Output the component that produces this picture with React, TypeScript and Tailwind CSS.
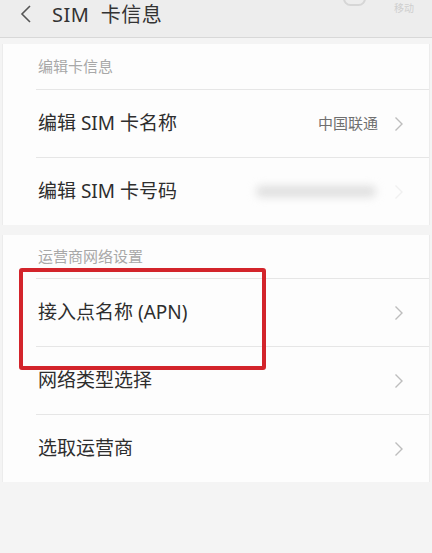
const Chevron = ({ color = '#bdbdbd' }: { color?: string }) => (
  <svg width="10" height="16" viewBox="0 0 10 16" className="shrink-0">
    <path d="M1.5 1.5 L8 8 L1.5 14.5" fill="none" stroke={color} strokeWidth="1.4" />
  </svg>
)

type RowProps = {
  label: string
  value?: React.ReactNode
  chevronColor?: string
}

const Row = ({ label, value, chevronColor }: RowProps) => (
  <div className="ml-[33px] h-[68px] flex items-center pr-[25px] border-t border-[#e6e6e6]">
    <span className="pl-[2px] text-[19px] text-[#2e2e2e] flex-1">{label}</span>
    {value}
    <span className="ml-[16px]">
      <Chevron color={chevronColor} />
    </span>
  </div>
)

const SectionTitle = ({ title, tall = false }: { title: string; tall?: boolean }) => (
  <div className={`${tall ? 'h-[45px]' : 'h-[43px]'} flex items-center pl-[35px] text-[15px] text-[#a8a8a8]`}>
    {title}
  </div>
)

export default function App() {
  return (
    <div
      className="w-[432px] h-[553px] bg-[#f4f4f4] relative overflow-hidden"
      style={{ fontFamily: '"Noto Sans", "Noto Sans CJK SC", sans-serif' }}
    >
      {/* header */}
      <div className="h-[38px] bg-[#ededed] border-b border-[#d8d8d8] flex items-center relative">
        <svg width="14" height="20" viewBox="0 0 14 20" className="ml-[19px] -mt-[10px]">
          <path d="M11 2 L3 10 L11 18" fill="none" stroke="#555" strokeWidth="1.6" />
        </svg>
        <span className="ml-[19px] -mt-[8px] text-[20px] text-[#333] tracking-[0.5px]">SIM&nbsp; 卡信息</span>
        <div className="absolute right-[66px] -top-[9px] w-[23px] h-[15px] rounded-full border-[2px] border-[#d6d6d6]" />
        <div className="absolute right-[18px] top-[2px] text-[10px] leading-[12px] text-[#cfcfcf]">移动</div>
      </div>

      <div className="pt-[6px] px-[2px]">
        {/* section 1 */}
        <div className="bg-[#fdfdfd] border-x border-[#ececec]">
          <SectionTitle title="编辑卡信息" tall />
          <Row
            label="编辑 SIM 卡名称"
            value={<span className="text-[15px] text-[#6f6f6f]">中国联通</span>}
          />
          <Row
            label="编辑 SIM 卡号码"
            chevronColor="#f0f0f0"
            value={<span className="block w-[120px] h-[11px] mr-[2px] rounded-full bg-[#dedede] blur-[4px]" />}
          />
        </div>

        <div className="h-[10px]" />

        {/* section 2 */}
        <div className="bg-[#fdfdfd] border-x border-[#ececec]">
          <SectionTitle title="运营商网络设置" />
          <Row label="接入点名称 (APN)" />
          <Row label="网络类型选择" />
          <Row label="选取运营商" />
        </div>
      </div>

      {/* highlight box */}
      <div className="absolute left-[19px] top-[268px] w-[247px] h-[102px] border-[4px] border-[#d3242b] rounded-[3px]" />
    </div>
  )
}
